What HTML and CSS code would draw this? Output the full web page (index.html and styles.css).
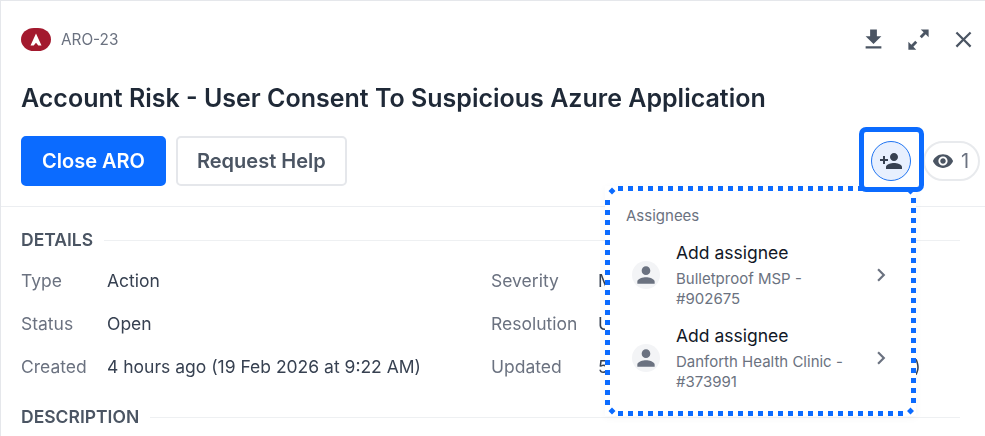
FILE: index.html
```html
<!DOCTYPE html>
<html lang="en">
<head>
<meta charset="utf-8">
<title>ARO-23</title>
<link rel="stylesheet" href="styles.css">
</head>
<body>
<div class="page">
  <main class="panel">
    <header class="head">
      <div class="topbar">
        <svg class="logo" viewBox="0 0 30 23"><rect width="30" height="23" rx="13" ry="11.500" fill="#a3192e"/><path d="M15 5.500l5.500 12h-3.200L15 14.800l-2.300 2.700H9.500z" fill="#fff"/></svg>
        <span class="ref">ARO-23</span>
        <div class="tools">
          <svg class="tool" viewBox="0 0 24 24"><path d="M19 9h-4V3H9v6H5l7 7 7-7zM5 18v2h14v-2H5z"/></svg>
          <svg class="tool" viewBox="0 0 24 24"><path d="M21 3h-7l2.600 2.600-3.500 3.500 1.800 1.800 3.500-3.500L21 10zM3 21h7l-2.600-2.600 3.500-3.500-1.800-1.800-3.500 3.500L3 14z"/></svg>
          <svg class="tool" viewBox="0 0 24 24"><path d="M19 6.410L17.590 5 12 10.590 6.410 5 5 6.410 10.590 12 5 17.590 6.410 19 12 13.410 17.590 19 19 17.590 13.410 12z"/></svg>
        </div>
      </div>
      <h1 class="title">Account Risk - User Consent To Suspicious Azure Application</h1>
      <div class="actions">
        <button class="btn primary">Close ARO</button>
        <button class="btn">Request Help</button>
        <div class="watch">
          <svg class="eye" viewBox="0 0 24 24"><path d="M12 4.500C7 4.500 2.730 7.610 1 12c1.730 4.390 6 7.500 11 7.500s9.270-3.110 11-7.500c-1.730-4.390-6-7.500-11-7.500zM12 17c-2.760 0-5-2.240-5-5s2.240-5 5-5 5 2.240 5 5-2.240 5-5 5zm0-8c-1.660 0-3 1.340-3 3s1.340 3 3 3 3-1.340 3-3-1.340-3-3-3z"/></svg>
          <span>1</span>
        </div>
      </div>
    </header>
    <section class="section">
      <h2 class="section-title"><span>DETAILS</span></h2>
      <div class="grid">
        <div class="row"><span class="label">Type</span><span class="value">Action</span></div>
        <div class="row"><span class="label">Severity</span><span class="value">Medium</span></div>
        <div class="row"><span class="label">Status</span><span class="value">Open</span></div>
        <div class="row"><span class="label">Resolution</span><span class="value">Unresolved</span></div>
        <div class="row"><span class="label">Created</span><span class="value">4 hours ago (19 Feb 2026 at 9:22 AM)</span></div>
        <div class="row"><span class="label">Updated</span><span class="value">5 minutes ago (19 Feb 2026 at 1:17 PM)</span></div>
      </div>
      <h2 class="section-title desc"><span>DESCRIPTION</span></h2>
    </section>
  </main>

  <aside class="popover">
    <div class="pop-title">Assignees</div>
    <div class="item">
      <span class="avatar"><svg viewBox="0 0 24 24"><path d="M12 12c2.210 0 4-1.790 4-4s-1.790-4-4-4-4 1.790-4 4 1.790 4 4 4zm0 2c-2.670 0-8 1.340-8 4v2h16v-2c0-2.660-5.330-4-8-4z"/></svg></span>
      <div class="item-text"><div class="item-name">Add assignee</div><div class="item-sub">Bulletproof MSP - #902675</div></div>
      <svg class="chev" viewBox="0 0 24 24"><path d="M10 6L8.590 7.410 13.170 12l-4.580 4.590L10 18l6-6z"/></svg>
    </div>
    <div class="item">
      <span class="avatar"><svg viewBox="0 0 24 24"><path d="M12 12c2.210 0 4-1.790 4-4s-1.790-4-4-4-4 1.790-4 4 1.790 4 4 4zm0 2c-2.670 0-8 1.340-8 4v2h16v-2c0-2.660-5.330-4-8-4z"/></svg></span>
      <div class="item-text"><div class="item-name">Add assignee</div><div class="item-sub">Danforth Health Clinic - #373991</div></div>
      <svg class="chev" viewBox="0 0 24 24"><path d="M10 6L8.590 7.410 13.170 12l-4.580 4.590L10 18l6-6z"/></svg>
    </div>
    <svg class="dots" viewBox="0 0 311 230">
      <line class="dash" x1="13" y1="2.500" x2="298" y2="2.500"/>
      <line class="dash" x1="13" y1="227.500" x2="298" y2="227.500"/>
      <line class="dash" x1="2.500" y1="14" x2="2.500" y2="219"/>
      <line class="dash" x1="308.500" y1="12" x2="308.500" y2="217"/>
      <path class="tips" d="M7 1.500L10.500 5 7 8.500 3.500 5zM305.500 1.500L309 5 305.500 8.500 302 5zM7 221.500L10.500 225 7 228.500 3.500 225zM305.500 221.500L309 225 305.500 228.500 302 225z"/>
    </svg>
  </aside>

  <div class="ring">
    <button class="assign">
      <svg viewBox="0 0 24 24"><path d="M15 12c2.210 0 4-1.790 4-4s-1.790-4-4-4-4 1.790-4 4 1.790 4 4 4zm-9-2V7H4v3H1v2h3v3h2v-3h3v-2H6zm9 4c-2.670 0-8 1.340-8 4v2h16v-2c0-2.660-5.330-4-8-4z"/></svg>
    </button>
  </div>
</div>
</body>
</html>
```

FILE: styles.css
```css
* { box-sizing: border-box; }
html, body { margin: 0; height: 100%; background: #fff; overflow: hidden; }
body { font-family: Inter, "Liberation Sans", sans-serif; color: #1f2937; }
.page { position: relative; width: 985px; height: 436px; overflow: hidden; border-top: 1px solid #e5e7eb; border-left: 1px solid #e5e7eb; }
.panel { filter: blur(0.7px); height: 100%; }
.head { padding: 27px 5px 0 20px; height: 206px; border-bottom: 1px solid #eceef1; }
.topbar { display: flex; align-items: center; height: 23px; }
.logo { width: 30px; height: 23px; }
.ref { margin-left: 10px; font-size: 15.300px; color: #6b7280; }
.tools { margin-left: auto; display: flex; gap: 18px; margin-right: 3.500px; }
.tool { width: 27px; height: 27px; fill: #4b5563; }
.title { margin: 31px 0 0; font-size: 25px; line-height: 32px; font-weight: 600; color: #1f2937; letter-spacing: 0; white-space: nowrap; }
.actions { display: flex; align-items: center; gap: 10px; margin-top: 22px; }
.btn { height: 50px; padding: 0 19px; border: 2px solid #e5e7eb; border-radius: 5px; background: #fff; font: 600 20px Inter, "Liberation Sans", sans-serif; color: #4b5563; }
.primary { background: #0b6bff; border-color: #0b6bff; color: #fff; }
.watch { margin-left: auto; display: flex; align-items: center; gap: 7px; width: 57px; height: 40px; padding-left: 7px; border: 2px solid #e8eaed; border-radius: 20px; color: #6b7280; font-size: 20px; }
.eye { width: 22px; height: 22px; fill: #4b5563; }
.section { padding: 23px 25px 0 20px; }
.section-title { display: flex; align-items: center; gap: 11px; margin: 0; font-size: 17.500px; line-height: 20px; font-weight: 600; color: #4b5563; }
.section-title::after { content: ""; flex: 1; height: 1px; background: #eef0f2; }
.grid { display: grid; grid-template-columns: 470px 1fr; row-gap: 23px; margin-top: 21px; }
.row { display: flex; font-size: 17.500px; line-height: 20px; white-space: nowrap; }
.label { width: 86px; color: #6b7280; }
.row:nth-child(even) .label { width: 107px; }
.value { color: #374151; }
.desc { margin-top: 30px; }
.ring { position: absolute; left: 858px; top: 126px; width: 65px; height: 65px; padding: 9px 0 0 7px; background: #fff; border: 5px solid #0b6bff; border-radius: 7px; }
.assign { display: flex; align-items: center; justify-content: center; width: 40px; height: 40px; padding: 0; border: 1px solid #1f74f2; border-radius: 50%; background: #e8f0fe; }
.assign svg { width: 24px; height: 24px; fill: #374151; }
.popover { position: absolute; left: 604px; top: 185px; width: 311px; height: 230px; padding: 20px 21px; background: #fff; box-shadow: 0 2px 8px rgba(17, 24, 39, 0.04); }
.dots { position: absolute; inset: 0; width: 311px; height: 230px; }
.dash { stroke: #0b6bff; stroke-width: 5; stroke-dasharray: 5 5; }
.tips { fill: #0b6bff; }
.pop-title { margin-bottom: 7px; font-size: 15px; line-height: 20px; color: #6b7280; }
.item { display: flex; align-items: center; height: 83px; padding-left: 6px; }
.avatar { display: flex; align-items: center; justify-content: center; width: 28px; height: 28px; border-radius: 50%; background: #f3f4f6; flex: none; }
.avatar svg { width: 26px; height: 26px; fill: #6b7280; }
.item-text { width: 180px; margin: 1px 0 0 16px; }
.item-name { font-size: 17.500px; line-height: 24px; margin-bottom: 4px; color: #111827; }
.item-sub { font-size: 15px; line-height: 20px; color: #6b7280; }
.chev { width: 26px; height: 26px; fill: #6b7280; margin-left: 12px; }
```
